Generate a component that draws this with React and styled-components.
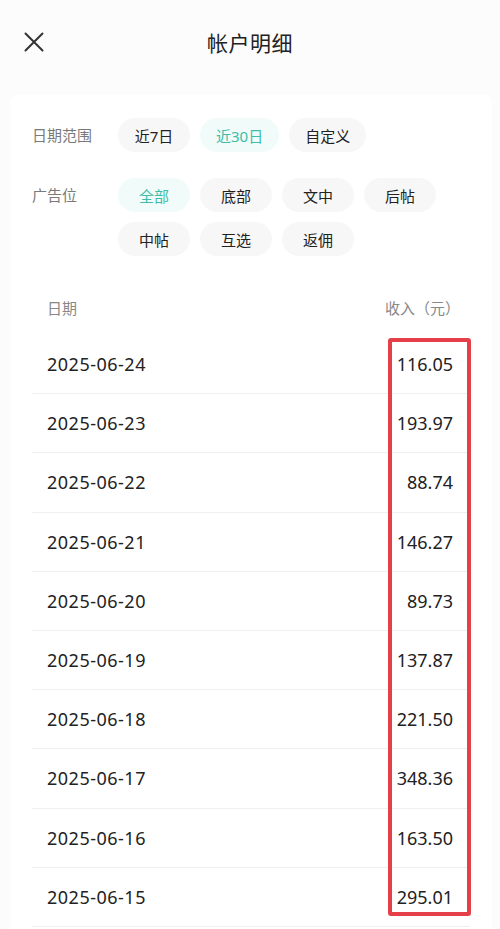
import React from "react";
import styled, { createGlobalStyle } from "styled-components";

const GlobalStyle = createGlobalStyle`
  html, body {
    margin: 0;
    padding: 0;
    background: #fcfcfc;
  }
  body {
    font-family: "Noto Sans", "Noto Sans CJK SC", sans-serif;
    color: #222;
  }
`;

const DATE_CHIPS = ["近7日", "近30日", "自定义"];
const AD_CHIPS = ["全部", "底部", "文中", "后帖", "中帖", "互选", "返佣"];

const ROWS = [
  ["2025-06-24", "116.05"],
  ["2025-06-23", "193.97"],
  ["2025-06-22", "88.74"],
  ["2025-06-21", "146.27"],
  ["2025-06-20", "89.73"],
  ["2025-06-19", "137.87"],
  ["2025-06-18", "221.50"],
  ["2025-06-17", "348.36"],
  ["2025-06-16", "163.50"],
  ["2025-06-15", "295.01"],
];

const CloseIcon = () => (
  <svg width="20" height="20" viewBox="0 0 20 20" fill="none">
    <path
      d="M1.5 1.5 L18.5 18.5 M18.5 1.5 L1.5 18.5"
      stroke="#333"
      strokeWidth="2"
      strokeLinecap="round"
    />
  </svg>
);

const App = () => {
  return (
    <Page>
      <GlobalStyle />
      <TopBar>
        <CloseButton aria-label="关闭">
          <CloseIcon />
        </CloseButton>
        <Title>帐户明细</Title>
        <span />
      </TopBar>

      <Card>
        <FilterRow>
          <FilterLabel>日期范围</FilterLabel>
          <ChipGroup>
            {DATE_CHIPS.map((c) => (
              <Chip key={c} active={c === "近30日"}>
                {c}
              </Chip>
            ))}
          </ChipGroup>
        </FilterRow>

        <FilterRow spaced>
          <FilterLabel>广告位</FilterLabel>
          <ChipGroup>
            {AD_CHIPS.map((c) => (
              <Chip key={c} active={c === "全部"}>
                {c}
              </Chip>
            ))}
          </ChipGroup>
        </FilterRow>

        <Table>
          <HeadRow>
            <span>日期</span>
            <span>收入（元）</span>
          </HeadRow>
          {ROWS.map(([date, amount]) => (
            <Row key={date}>
              <DateCell>{date}</DateCell>
              <AmountCell>{amount}</AmountCell>
            </Row>
          ))}
        </Table>
      </Card>

      <Highlight />
    </Page>
  );
};

const Page = styled.div`
  position: relative;
  width: 500px;
  height: 929px;
  overflow: hidden;
  background: #fcfcfc;
`;

const TopBar = styled.header`
  display: grid;
  grid-template-columns: 70px 1fr 70px;
  align-items: center;
  height: 84px;
`;

const CloseButton = styled.button`
  display: flex;
  align-items: center;
  padding: 0 0 0 24px;
  border: none;
  background: none;
  cursor: pointer;
`;

const Title = styled.h1`
  margin: 0;
  text-align: center;
  font-size: 21px;
  font-weight: 400;
  letter-spacing: 0.5px;
  color: #222;
`;

const Card = styled.main`
  margin: 11px 8px 0 10px;
  padding-top: 23px;
  background: #fff;
  border-radius: 8px;
  min-height: 900px;
`;

const FilterRow = styled.div`
  display: flex;
  align-items: flex-start;
  padding: 0 22px;
  margin-top: ${(p) => (p.spaced ? "26px" : "0")};
`;

const FilterLabel = styled.div`
  flex: 0 0 86px;
  line-height: 34px;
  font-size: 15px;
  color: #7a7a7a;
`;

const ChipGroup = styled.div`
  display: flex;
  flex-wrap: wrap;
  gap: 10px 10px;
  width: 330px;
`;

const Chip = styled.div`
  display: flex;
  align-items: center;
  justify-content: center;
  box-sizing: border-box;
  height: 34px;
  min-width: 72px;
  padding: 0 16px;
  border-radius: 17px;
  font-size: 15px;
  color: ${(p) => (p.active ? "#3dbda6" : "#222")};
  background: ${(p) => (p.active ? "#f0fbfa" : "#f7f7f7")};
`;

const Table = styled.section`
  margin-top: 24px;
  padding: 0 22px;
`;

const HeadRow = styled.div`
  display: flex;
  justify-content: space-between;
  align-items: center;
  height: 55px;
  padding: 0 10px 0 15px;
  font-size: 15px;
  color: #888;
`;

const Row = styled.div`
  display: flex;
  justify-content: space-between;
  align-items: center;
  box-sizing: border-box;
  height: 59.2px;
  padding: 0 17px 0 15px;
  border-bottom: 1px solid #efefef;
`;

const DateCell = styled.span`
  font-size: 18px;
  letter-spacing: 0.5px;
  color: #222;
`;

const AmountCell = styled.span`
  font-size: 18px;
  color: #222;
`;

const Highlight = styled.div`
  position: absolute;
  left: 388px;
  top: 338px;
  width: 83px;
  height: 578px;
  box-sizing: border-box;
  border: 4px solid #e5404a;
  border-radius: 3px;
  pointer-events: none;
`;

export default App;
